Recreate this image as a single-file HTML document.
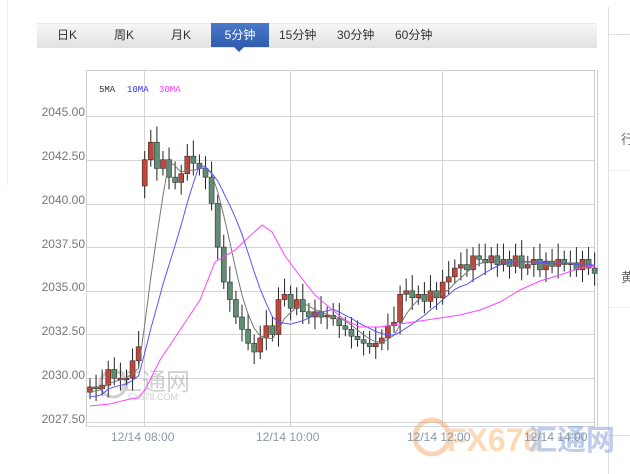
<!DOCTYPE html>
<html><head><meta charset="utf-8"><style>
body{margin:0;width:630px;height:474px;background:#fff;position:relative;overflow:hidden;font-family:"Liberation Sans","Noto Sans CJK SC",sans-serif}
.bar{position:absolute;left:37px;top:23px;width:560px;height:24px;background:linear-gradient(#f6f6f6,#e2e2e2);border-top:1px solid #e8e8e8}
.t{position:absolute;top:23px;height:24px;line-height:24px;font-size:12px;color:#333}
.act{background:linear-gradient(#4b78c8,#2f5cb0);color:#fff;text-align:center;width:58px;left:211px}
.ptr{position:absolute;left:234px;top:47px;border-left:5px solid transparent;border-right:5px solid transparent;border-top:5px solid #2f5cb0}
.yl{position:absolute;left:30px;font-size:12px;color:#777;width:55px;text-align:right}
.xl{position:absolute;top:430px;font-size:12px;color:#8899aa}
</style></head><body>
<div style="position:absolute;left:7px;top:0;width:1px;height:185px;background:#eee"></div>
<div style="position:absolute;left:608px;top:7px;width:1px;height:467px;background:#dde"></div>
<div style="position:absolute;left:609px;top:34px;width:21px;height:1px;background:#dde"></div>
<div style="position:absolute;left:609px;top:170px;width:21px;height:1px;background:#eee"></div>
<div style="position:absolute;left:609px;top:307px;width:21px;height:1px;background:#eee"></div>
<div style="position:absolute;left:609px;top:435px;width:21px;height:1px;background:#dde"></div>
<div style="position:absolute;left:621px;top:129px;font-size:13px;color:#666">行</div>
<div style="position:absolute;left:621px;top:267px;font-size:13px;color:#666">黄</div>
<div class="bar"></div>
<div class="t" style="left:57px">日K</div>
<div class="t" style="left:114px">周K</div>
<div class="t" style="left:171px">月K</div>
<div class="t act">5分钟</div>
<div class="ptr"></div>
<div class="t" style="left:279px">15分钟</div>
<div class="t" style="left:337px">30分钟</div>
<div class="t" style="left:395px">60分钟</div>
<div class="yl" style="top:105px">2045.00</div>
<div class="yl" style="top:149px">2042.50</div>
<div class="yl" style="top:193px">2040.00</div>
<div class="yl" style="top:237px">2037.50</div>
<div class="yl" style="top:280px">2035.00</div>
<div class="yl" style="top:324px">2032.50</div>
<div class="yl" style="top:368px">2030.00</div>
<div class="yl" style="top:412px">2027.50</div>
<svg id="c" style="position:absolute;left:0;top:0" width="630" height="474">
<rect x="86.5" y="70.5" width="508" height="356" fill="none" stroke="#ccc"/>
<line x1="597.5" y1="70" x2="597.5" y2="426" stroke="#ccc"/>
<g stroke="#d4d4d4"><line x1="86" y1="116.5" x2="594" y2="116.5"/><line x1="86" y1="160.5" x2="594" y2="160.5"/><line x1="86" y1="204.5" x2="594" y2="204.5"/><line x1="86" y1="247.5" x2="594" y2="247.5"/><line x1="86" y1="291.5" x2="594" y2="291.5"/><line x1="86" y1="334.5" x2="594" y2="334.5"/><line x1="86" y1="378.5" x2="594" y2="378.5"/><line x1="86" y1="422.5" x2="594" y2="422.5"/>
<line x1="144.5" y1="70" x2="144.5" y2="426"/><line x1="290.5" y1="70" x2="290.5" y2="426"/><line x1="442.5" y1="70" x2="442.5" y2="426"/></g>
<line x1="86" y1="426.5" x2="594" y2="426.5" stroke="#cfd8e4"/>
<text x="99" y="92" font-family="Liberation Mono,monospace" font-size="9" fill="#333">5MA</text>
<text x="127" y="92" font-family="Liberation Mono,monospace" font-size="9" fill="#33f">10MA</text>
<text x="159" y="92" font-family="Liberation Mono,monospace" font-size="9" fill="#f3f">30MA</text>
<g opacity="0.4"><circle cx="113" cy="384" r="13" fill="none" stroke="#888" stroke-width="3"/>
<text x="118" y="390" font-size="24" fill="#888" font-family="Noto Sans CJK SC,sans-serif">汇通网</text>
<text x="128" y="400" font-size="9" fill="#888">FX678.COM</text></g>
<g id="k"></g>
<path d="M90,406 L110,404 L130,399 L138,398 L145,390 L160,360 L180,330 L200,300 L215,262 L235,250 L250,236 L262,225 L272,232 L285,256 L300,276 L315,295 L330,308 L345,320 L360,327 L380,327 L400,324 L420,321 L440,318 L460,315 L480,310 L500,302 L520,290 L540,281 L560,275 L580,268 L595,266" fill="none" stroke="#ff44ff" stroke-width="1"/>
<g opacity="0.45"><circle cx="432" cy="437" r="17" fill="none" stroke="#f3a060" stroke-width="5"/>
<text x="447" y="451" font-size="32" font-weight="bold" fill="#f5b060" font-family="Liberation Sans,sans-serif">FX678</text>
<text x="528" y="450" font-size="29" font-weight="bold" fill="#7090d0" font-family="Noto Sans CJK SC,sans-serif">汇通网</text></g>
</svg>
<div class="xl" style="left:111px">12/14 08:00</div>
<div class="xl" style="left:256px">12/14 10:00</div>
<div class="xl" style="left:407px">12/14 12:00</div>
<div class="xl" style="left:524px">12/14 14:00</div>
<script>
var C=[2029.5,2029.4,2029.6,2030.5,2030.0,2030.0,2030.0,2031,2031.8,2042.5,2043.5,2042.0,2042.5,2041.5,2041.2,2041.7,2042.7,2042.3,2042.0,2041.5,2040.0,2037.5,2035.5,2034.5,2033.5,2032.8,2032.0,2031.5,2032.3,2033.0,2032.5,2034.5,2034.8,2034.0,2034.5,2033.8,2033.5,2033.8,2033.5,2033.6,2033.4,2033.0,2032.8,2032.4,2032.2,2032.0,2031.8,2032.0,2032.3,2033.0,2033.2,2034.8,2035.0,2034.6,2034.8,2034.4,2035.0,2034.6,2035.5,2035.8,2036.3,2036.5,2036.2,2037.0,2036.8,2036.6,2037.0,2036.5,2036.8,2036.4,2037.0,2036.3,2036.5,2036.8,2036.2,2036.7,2036.4,2036.8,2036.5,2036.6,2036.2,2036.8,2036.3,2036.0];
function Y(p){return 116+(2045-p)*17.48}function X(i){return 90+6.08*i}
var s='',o=C[0]-0.3;
for(var i=0;i<C.length;i++){var op=i?C[i-1]:o,cl=C[i];if(i==9)op=2041;var up=cl>=op,hi=Math.max(op,cl)+0.5+(i%3)*0.2,lo=Math.min(op,cl)-0.4-(i%2)*0.3;
var x=X(i),y1=Y(Math.max(op,cl)),y2=Y(Math.min(op,cl));if(y2-y1<1.5)y2=y1+1.5;
s+='<line x1="'+x+'" y1="'+Y(hi)+'" x2="'+x+'" y2="'+Y(lo)+'" stroke="#222"/>';
s+='<rect x="'+(x-2.5)+'" y="'+y1+'" width="5" height="'+(y2-y1)+'" fill="'+(up?'#c0463a':'#5e8f72')+'" stroke="#333" stroke-width="0.6"/>';}
function ma(n,col){var p='';for(var i=0;i<C.length;i++){var a=0,k=0;for(var j=Math.max(0,i-n+1);j<=i;j++){a+=C[j];k++}var v=a/k;if(i<n)v=v-(n-k)*0.06;p+=(i?'L':'M')+X(i).toFixed(1)+','+Y(v).toFixed(1)}return '<path d="'+p+'" fill="none" stroke="'+col+'" stroke-width="1"/>'}
s+=ma(5,'#777')+ma(10,'#5555ff');
document.getElementById('k').innerHTML=s;
</script>
</body></html>
